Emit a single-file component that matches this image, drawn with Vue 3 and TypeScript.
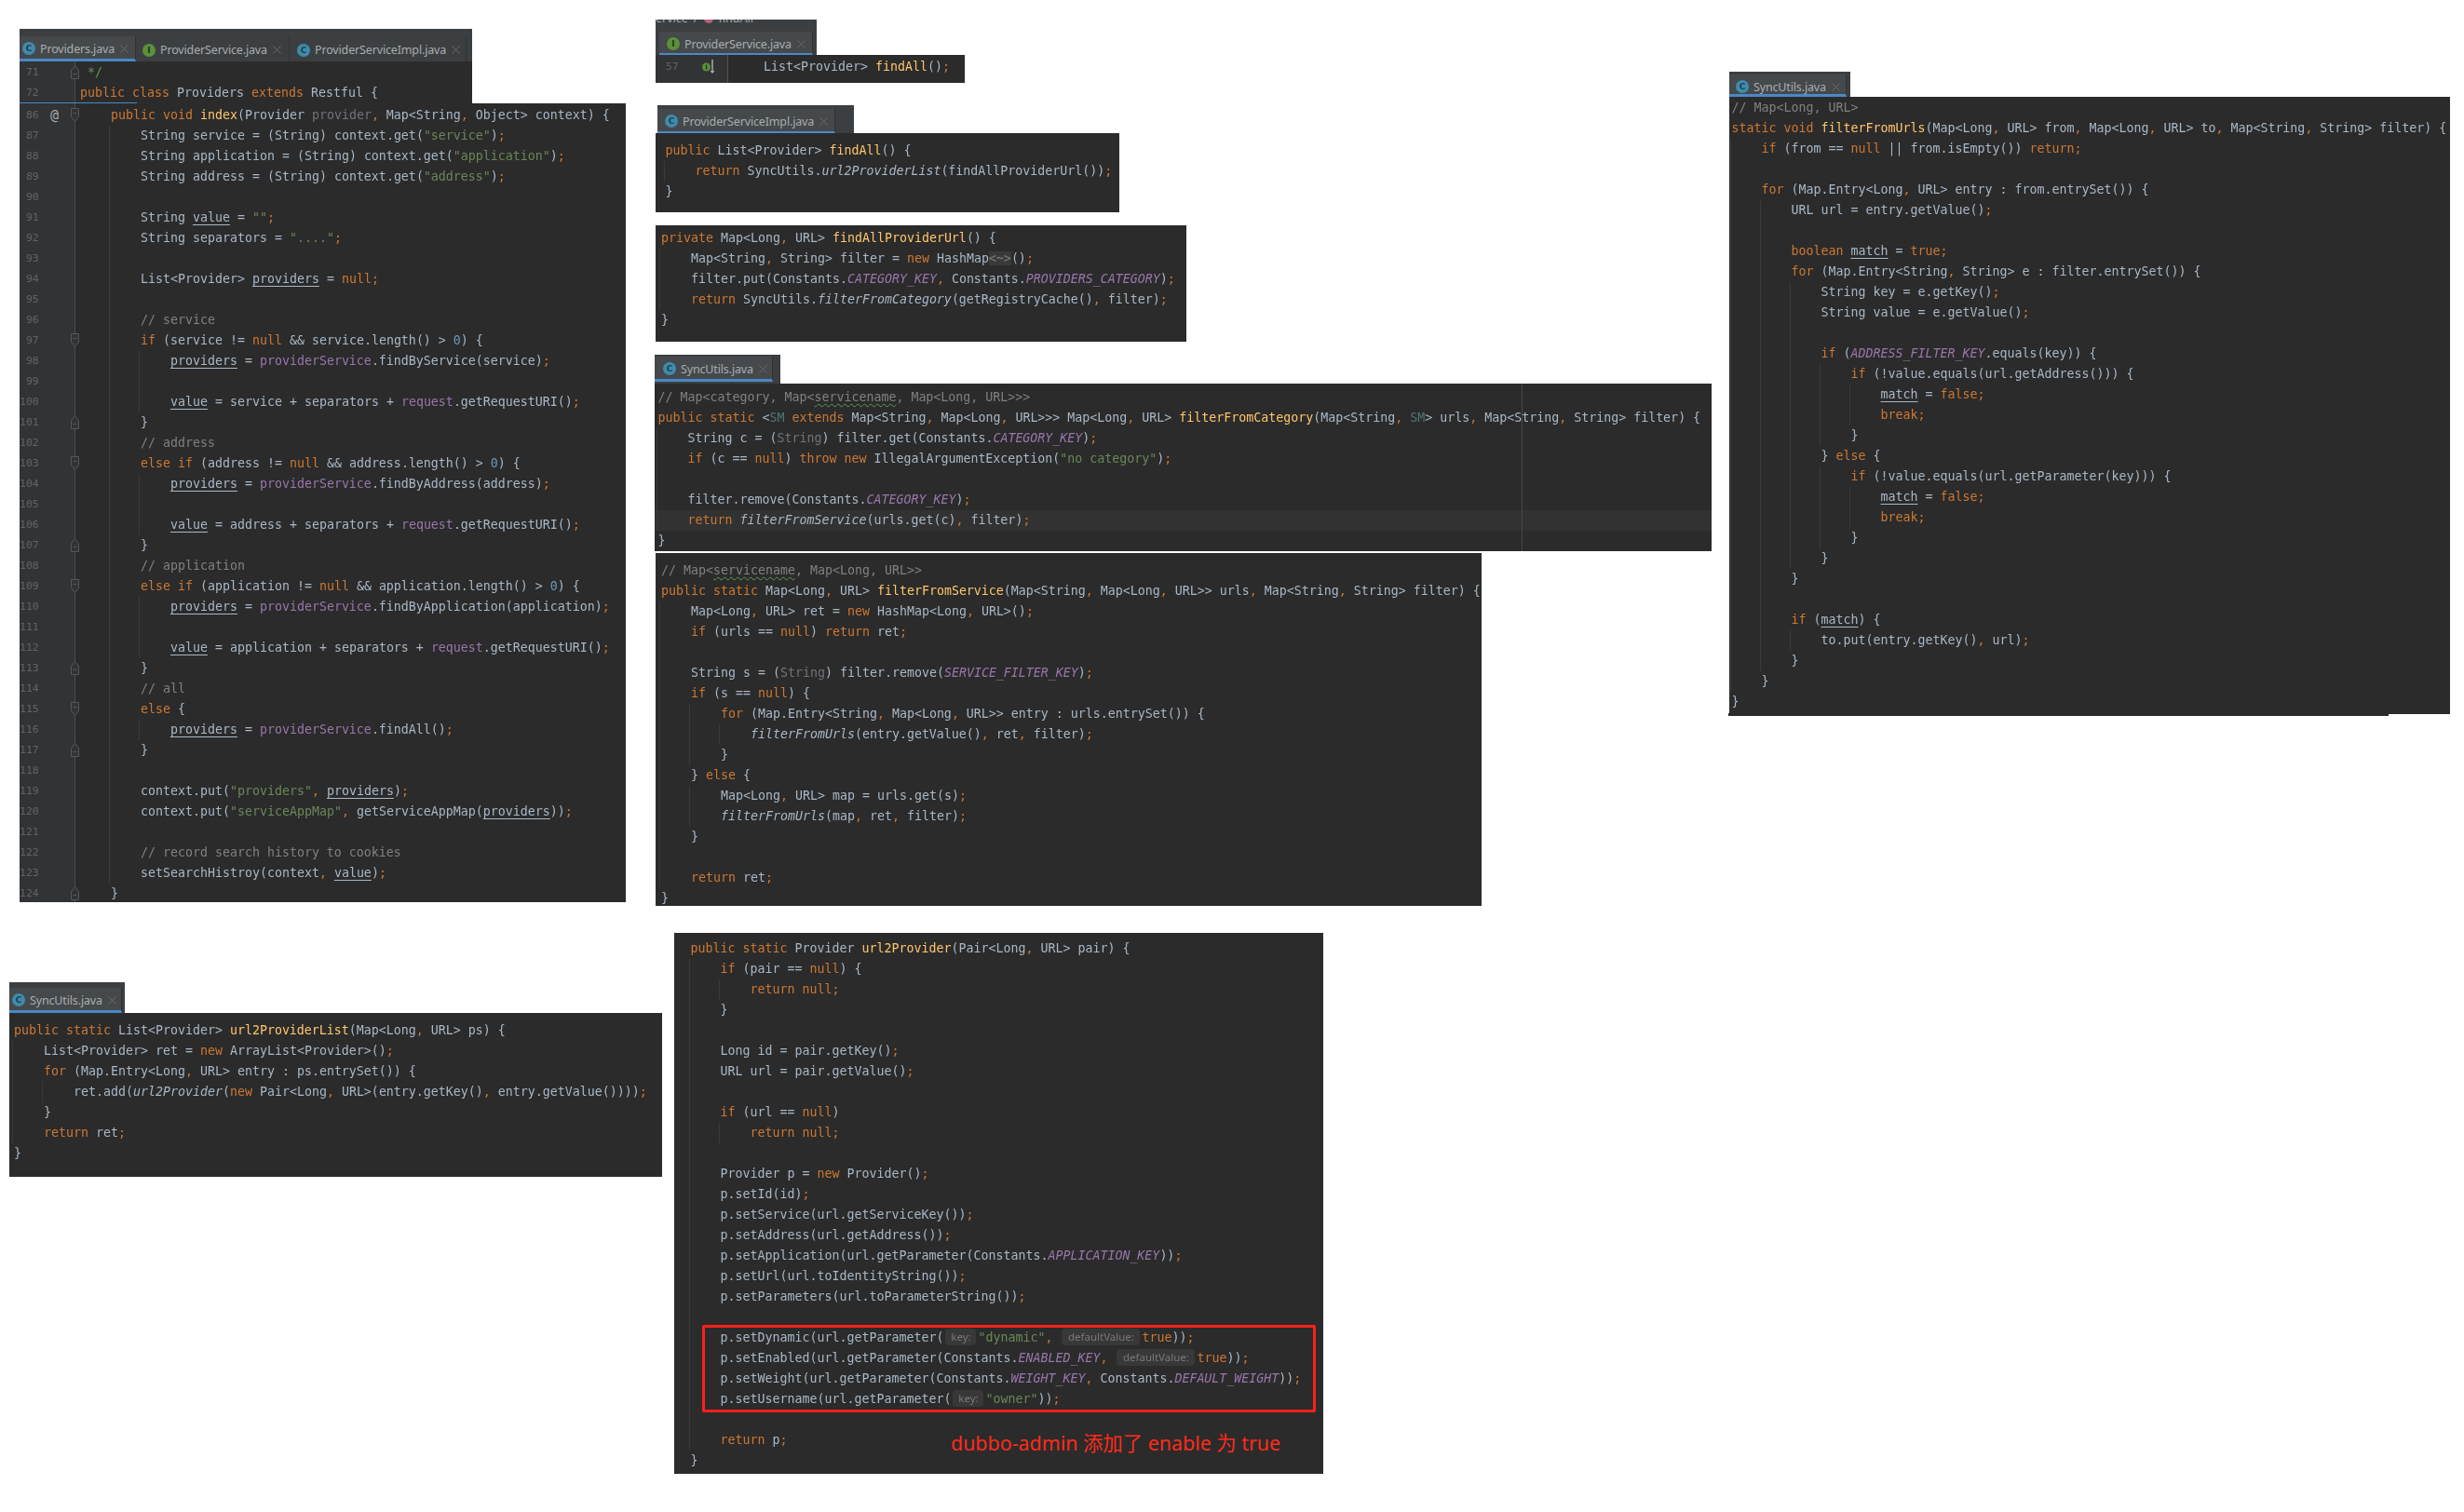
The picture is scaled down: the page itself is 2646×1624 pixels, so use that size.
<script setup lang="ts">
interface Tab { name: string; kind: 'c' | 'i'; w: number; pad: number; active?: boolean }
interface Bar { x: number; y: number; w: number; h: number; strip: number; tabH: number; off: number; line: number; nudge: number; tabs: Tab[]; crumb?: boolean }
interface Code {
  x: number; y: number; w: number; h: number; pad: number; textX: number; lines: string[];
  gutter?: number; first?: number; lnRight?: number; sep?: boolean; cur?: number; rule?: number;
  foldOpen?: number[]; foldClose?: number[]; at?: number; blue?: number; implMark?: boolean
}
interface Tok { t: string; c: string }

const bars: Bar[] = [
  { x: 21, y: 31, w: 486, h: 35, strip: 8, tabH: 27, off: 0, line: 3, nudge: 2, tabs: [
    { name: 'Providers.java', kind: 'c', w: 125, pad: 3, active: true },
    { name: 'ProviderService.java', kind: 'i', w: 165, pad: 7 },
    { name: 'ProviderServiceImpl.java', kind: 'c', w: 190, pad: 8 }
  ] },
  { x: 704, y: 21, w: 173, h: 38, strip: 13, tabH: 25, off: 4, line: 2, nudge: 3, crumb: true, tabs: [
    { name: 'ProviderService.java', kind: 'i', w: 165, pad: 8, active: true }
  ] },
  { x: 706, y: 113, w: 211, h: 30, strip: 4, tabH: 26, off: 0, line: 2, nudge: 2, tabs: [
    { name: 'ProviderServiceImpl.java', kind: 'c', w: 191, pad: 8, active: true }
  ] },
  { x: 703, y: 381, w: 135, h: 31, strip: 2, tabH: 27, off: 0, line: 3, nudge: 2, tabs: [
    { name: 'SyncUtils.java', kind: 'c', w: 127, pad: 9, active: true }
  ] },
  { x: 10, y: 1055, w: 124, h: 33, strip: 6, tabH: 27, off: 0, line: 3, nudge: 2, tabs: [
    { name: 'SyncUtils.java', kind: 'c', w: 121, pad: 3, active: true }
  ] },
  { x: 1857, y: 77, w: 130, h: 27, strip: 3, tabH: 24, off: 0, line: 3, nudge: 5, tabs: [
    { name: 'SyncUtils.java', kind: 'c', w: 126, pad: 7, active: true }
  ] }
]

const codes: Code[] = [
  { x: 21, y: 66, w: 486, h: 45, pad: 1, textX: 65, gutter: 60, first: 71, lnRight: 20.5, sep: true, foldClose: [0], blue: 126, lines: [
    ' [n:*/]',
    'public class Providers extends Restful {'
  ] },
  { x: 21, y: 111, w: 651, h: 858, pad: 2, textX: 66, gutter: 60, first: 86, lnRight: 20.5, sep: true, at: 0,
    foldOpen: [0, 11, 17, 23, 29], foldClose: [15, 21, 27, 31, 38], lines: [
    '    public void [f:index](Provider [d:provider], Map<String, Object> context) {',
    '        String service = (String) context.get("service");',
    '        String application = (String) context.get("application");',
    '        String address = (String) context.get("address");',
    '',
    '        String [u:value] = "";',
    '        String separators = "....";',
    '',
    '        List<Provider> [u:providers] = null;',
    '',
    '        // service',
    '        if (service != null && service.length() > 0) {',
    '            [u:providers] = [v:providerService].findByService(service);',
    '',
    '            [u:value] = service + separators + [v:request].getRequestURI();',
    '        }',
    '        // address',
    '        else if (address != null && address.length() > 0) {',
    '            [u:providers] = [v:providerService].findByAddress(address);',
    '',
    '            [u:value] = address + separators + [v:request].getRequestURI();',
    '        }',
    '        // application',
    '        else if (application != null && application.length() > 0) {',
    '            [u:providers] = [v:providerService].findByApplication(application);',
    '',
    '            [u:value] = application + separators + [v:request].getRequestURI();',
    '        }',
    '        // all',
    '        else {',
    '            [u:providers] = [v:providerService].findAll();',
    '        }',
    '',
    '        context.put("providers", [u:providers]);',
    '        context.put("serviceAppMap", getServiceAppMap([u:providers]));',
    '',
    '        // record search history to cookies',
    '        setSearchHistroy(context, [u:value]);',
    '    }'
  ] },
  { x: 704, y: 59, w: 332, h: 30, pad: 2, textX: 116, gutter: 78, first: 57, lnRight: 24.5, implMark: true, lines: [
    'List<Provider> [f:findAll]();'
  ] },
  { x: 704, y: 143, w: 498, h: 85, pad: 8, textX: 10.5, lines: [
    'public List<Provider> [f:findAll]() {',
    '    return SyncUtils.[i:url2ProviderList](findAllProviderUrl());',
    '}'
  ] },
  { x: 704, y: 242, w: 570, h: 125, pad: 3, textX: 6, lines: [
    'private Map<Long, URL> [f:findAllProviderUrl]() {',
    '    Map<String, String> filter = new HashMap[o:<~>]();',
    '    filter.put(Constants.[k:CATEGORY_KEY], Constants.[k:PROVIDERS_CATEGORY]);',
    '    return SyncUtils.[i:filterFromCategory](getRegistryCache(), filter);',
    '}'
  ] },
  { x: 703, y: 412, w: 1135, h: 180, pad: 4, textX: 3.5, cur: 6, rule: 931, lines: [
    '// Map<category, Map<[w:servicename], Map<Long, URL>>>',
    'public static <[g:SM] extends Map<String, Map<Long, URL>>> Map<Long, URL> [f:filterFromCategory](Map<String, [g:SM]> urls, Map<String, String> filter) {',
    '    String c = ([d:String]) filter.get(Constants.[k:CATEGORY_KEY]);',
    '    if (c == null) throw new IllegalArgumentException("no category");',
    '',
    '    filter.remove(Constants.[k:CATEGORY_KEY]);',
    '    return [i:filterFromService](urls.get(c), filter);',
    '}'
  ] },
  { x: 704, y: 594, w: 887, h: 379, pad: 8, textX: 6, lines: [
    '// Map<[w:servicename], Map<Long, URL>>',
    'public static Map<Long, URL> [f:filterFromService](Map<String, Map<Long, URL>> urls, Map<String, String> filter) {',
    '    Map<Long, URL> ret = new HashMap<Long, URL>();',
    '    if (urls == null) return ret;',
    '',
    '    String s = ([d:String]) filter.remove([k:SERVICE_FILTER_KEY]);',
    '    if (s == null) {',
    '        for (Map.Entry<String, Map<Long, URL>> entry : urls.entrySet()) {',
    '            [i:filterFromUrls](entry.getValue(), ret, filter);',
    '        }',
    '    } else {',
    '        Map<Long, URL> map = urls.get(s);',
    '        [i:filterFromUrls](map, ret, filter);',
    '    }',
    '',
    '    return ret;',
    '}'
  ] },
  { x: 724, y: 1002, w: 697, h: 581, pad: 6, textX: 17.6, lines: [
    'public static Provider [f:url2Provider](Pair<Long, URL> pair) {',
    '    if (pair == null) {',
    '        return null;',
    '    }',
    '',
    '    Long id = pair.getKey();',
    '    URL url = pair.getValue();',
    '',
    '    if (url == null)',
    '        return null;',
    '',
    '    Provider p = new Provider();',
    '    p.setId(id);',
    '    p.setService(url.getServiceKey());',
    '    p.setAddress(url.getAddress());',
    '    p.setApplication(url.getParameter(Constants.[k:APPLICATION_KEY]));',
    '    p.setUrl(url.toIdentityString());',
    '    p.setParameters(url.toParameterString());',
    '',
    '    p.setDynamic(url.getParameter([h:key:]"dynamic", [h:defaultValue:]true));',
    '    p.setEnabled(url.getParameter(Constants.[k:ENABLED_KEY], [h:defaultValue:]true));',
    '    p.setWeight(url.getParameter(Constants.[k:WEIGHT_KEY], Constants.[k:DEFAULT_WEIGHT]));',
    '    p.setUsername(url.getParameter([h:key:]"owner"));',
    '',
    '    return p;',
    '}'
  ] },
  { x: 10, y: 1088, w: 701, h: 176, pad: 8, textX: 5, lines: [
    'public static List<Provider> [f:url2ProviderList](Map<Long, URL> ps) {',
    '    List<Provider> ret = new ArrayList<Provider>();',
    '    for (Map.Entry<Long, URL> entry : ps.entrySet()) {',
    '        ret.add([i:url2Provider](new Pair<Long, URL>(entry.getKey(), entry.getValue())));',
    '    }',
    '    return ret;',
    '}'
  ] },
  { x: 1857, y: 104, w: 774, h: 663, pad: 1, textX: 2.6, lines: [
    '// Map<Long, URL>',
    'static void [f:filterFromUrls](Map<Long, URL> from, Map<Long, URL> to, Map<String, String> filter) {',
    '    if (from == null || from.isEmpty()) return;',
    '',
    '    for (Map.Entry<Long, URL> entry : from.entrySet()) {',
    '        URL url = entry.getValue();',
    '',
    '        boolean [u:match] = true;',
    '        for (Map.Entry<String, String> e : filter.entrySet()) {',
    '            String key = e.getKey();',
    '            String value = e.getValue();',
    '',
    '            if ([k:ADDRESS_FILTER_KEY].equals(key)) {',
    '                if (!value.equals(url.getAddress())) {',
    '                    [u:match] = false;',
    '                    break;',
    '                }',
    '            } else {',
    '                if (!value.equals(url.getParameter(key))) {',
    '                    [u:match] = false;',
    '                    break;',
    '                }',
    '            }',
    '        }',
    '',
    '        if ([u:match]) {',
    '            to.put(entry.getKey(), url);',
    '        }',
    '    }',
    '}'
  ] }
]

const KW = /\b(?:public|private|class|extends|static|void|if|else|null|return|new|for|throw|boolean|true|false|break)\b/
const SPLIT = /("[^"]*"|\b\d+\b|[;,]|\b[a-z]+\b)/
const MARK = /\[(\w+):([^\]]*)\]/g

function plain(text: string, comment: boolean): Tok[] {
  if (comment) return [{ t: text, c: 'cm' }]
  const out: Tok[] = []
  for (const part of text.split(SPLIT)) {
    if (!part) continue
    let c = ''
    if (part.startsWith('"')) c = 'st'
    else if (/^\d+$/.test(part)) c = 'nu'
    else if (part === ';' || part === ',') c = 'pu'
    else if (KW.test(part) && part.replace(KW, '') === '') c = 'kw'
    out.push({ t: part, c })
  }
  return out
}

function tokens(line: string): Tok[] {
  const comment = line.trim().startsWith('//')
  const out: Tok[] = []
  let last = 0
  for (const m of line.matchAll(MARK)) {
    const at = m.index as number
    if (at > last) out.push(...plain(line.slice(last, at), comment))
    out.push({ t: m[2], c: 'm-' + m[1] + (m[1] === 'h' && m[2] === 'key:' ? ' hk' : '') })
    last = at + m[0].length
  }
  if (last < line.length) out.push(...plain(line.slice(last), comment))
  return out
}

function indentOf(line: string): number {
  return line.length - line.trimStart().length
}

function guides(c: Code): { left: number; top: number; height: number }[] {
  const res: { left: number; top: number; height: number }[] = []
  const ls = c.lines
  ls.forEach((l, i) => {
    if (!l.trim()) return
    const n = indentOf(l)
    let next = i + 1
    while (next < ls.length && !ls[next].trim()) next++
    if (next >= ls.length || indentOf(ls[next]) <= n) return
    let j = next
    let end = next
    while (j < ls.length) {
      if (ls[j].trim()) {
        if (indentOf(ls[j]) <= n) break
        end = j
      }
      j++
    }
    res.push({
      left: c.textX - (c.gutter ?? 0) + n * 8 - 2,
      top: c.pad + (i + 1) * 22,
      height: (end - i) * 22
    })
  })
  return res
}

const view = codes.map((c) => ({
  ...c,
  rows: c.lines.map(tokens),
  guideList: guides(c)
}))

function box(o: { x: number; y: number; w: number; h: number }) {
  return { left: o.x + 'px', top: o.y + 'px', width: o.w + 'px', height: o.h + 'px' }
}
</script>

<template>
  <div class="canvas">
    <div v-for="(b, bi) in bars" :key="'b' + bi" class="tabbar" :style="box(b)">
      <div v-if="b.crumb" class="crumb">
        <span>ervice</span><span class="slash">/</span><i class="crumb-dot"></i><span>findAll</span>
      </div>
      <div class="tabs" :style="{ top: b.strip + 'px', left: b.off + 'px' }">
        <div
          v-for="t in b.tabs"
          :key="t.name"
          class="tab"
          :class="{ active: t.active }"
          :style="{ width: t.w + 'px', height: b.tabH + 'px', paddingLeft: t.pad + 'px', paddingTop: b.nudge + 'px', borderBottomWidth: t.active ? b.line + 'px' : '0' }"
        >
          <span class="ficon" :class="t.kind">{{ t.kind === 'c' ? 'C' : 'I' }}</span>
          <span class="tname">{{ t.name }}</span>
          <svg class="tclose" width="9" height="9" viewBox="0 0 9 9"><path d="M.5.5l8 8M8.5.5l-8 8" stroke="#686b6d" fill="none" /></svg>
        </div>
      </div>
    </div>

    <div v-for="(c, ci) in view" :key="'c' + ci" class="code" :style="box(c)">
      <div v-if="c.gutter" class="gutter" :class="{ sep: c.sep, edge: c.implMark }" :style="{ width: c.gutter + 'px', paddingTop: c.pad + 'px' }">
        <div v-for="(_, i) in c.rows" :key="i" class="gline">
          <span class="ln" :style="{ width: c.lnRight + 'px' }">{{ (c.first ?? 0) + i }}</span>
          <span v-if="c.at === i" class="atmark">@</span>
          <svg v-if="c.foldOpen?.includes(i)" class="fold" width="9" height="15" viewBox="0 0 9 15"><path d="M.5.5h8v9l-4 5-4-5zM2.5 5.500h4" fill="#313335" stroke="#55585a" /></svg>
          <svg v-if="c.foldClose?.includes(i)" class="fold" width="9" height="15" viewBox="0 0 9 15"><path d="M.5 14.500h8v-9l-4-5-4 5zM2.500 9.500h4" fill="#313335" stroke="#55585a" /></svg>
          <svg v-if="c.implMark" class="impl" width="16" height="18" viewBox="0 0 16 18">
            <circle cx="5.500" cy="9" r="4.500" fill="#5c8f3b" />
            <path d="M5.500 6.500v5" stroke="#2b3a20" stroke-width="1.500" />
            <path d="M12 1v13" stroke="#a8adb0" stroke-width="1.500" />
            <path d="M9.500 13h5L12 16z" fill="#a8adb0" />
          </svg>
        </div>
      </div>
      <div class="lines" :style="{ paddingTop: c.pad + 'px' }">
        <div
          v-for="(r, i) in c.rows"
          :key="i"
          class="row"
          :class="{ cur: c.cur === i }"
          :style="{ paddingLeft: c.textX - (c.gutter ?? 0) + 'px' }"
        ><span v-for="(k, ki) in r" :key="ki" :class="k.c">{{ k.t }}</span></div>
        <i
          v-for="(g, gi) in c.guideList"
          :key="'g' + gi"
          class="guide"
          :style="{ left: g.left + 'px', top: g.top + 'px', height: g.height + 'px' }"
        ></i>
        <i v-if="c.rule" class="rule" :style="{ left: c.rule + 'px' }"></i>
      </div>
      <i v-if="c.blue" class="blueline" :style="{ width: c.blue + 'px' }"></i>
    </div>

    <div class="underbar"></div>
    <div class="redbox"></div>
    <div class="note">dubbo-admin 添加了 enable 为 true</div>
  </div>
</template>

<style scoped>
.canvas {
  position: relative;
  width: 2646px;
  height: 1624px;
  overflow: hidden;
  background: #fff;
}
.tabbar {
  position: absolute;
  background: #3c3f41;
  overflow: hidden;
}
.crumb {
  position: absolute;
  left: 0;
  top: -9px;
  display: flex;
  align-items: center;
  gap: 6px;
  font: 12.500px "Noto Sans", sans-serif;
  color: #a7adb1;
  line-height: 16px;
  white-space: nowrap;
}
.crumb-dot {
  width: 10px;
  height: 10px;
  border-radius: 50%;
  background: #b5627a;
}
.tabs {
  position: absolute;
  display: flex;
}
.tab {
  box-sizing: border-box;
  display: flex;
  align-items: center;
  background: #3c3f41;
  border-right: 1px solid #323232;
  border-bottom: 0 solid #4a88c7;
}
.tab.active {
  background: #45494b;
}
.ficon {
  flex: none;
  width: 14px;
  height: 14px;
  border-radius: 50%;
  font: 700 9px/14px "DejaVu Sans", sans-serif;
  text-align: center;
}
.ficon.c {
  background: #3f8bac;
  color: #1f3f4d;
}
.ficon.i {
  background: #5c8f3b;
  color: #22361a;
}
.tname {
  margin-left: 5px;
  font: 12.500px "Noto Sans", sans-serif;
  letter-spacing: -0.150px;
  color: #a7adb1;
  white-space: nowrap;
}
.tclose {
  flex: none;
  margin-left: 6px;
}
.code {
  position: absolute;
  display: flex;
  background: #2b2b2b;
  overflow: hidden;
}
.gutter {
  flex: none;
  box-sizing: border-box;
  background: #313335;
}
.gutter.sep {
  border-right: 1px solid #4b4d4f;
}
.gutter.edge {
  border-right: 1px solid #505254;
}
.gline {
  position: relative;
  height: 22px;
}
.ln {
  display: block;
  text-align: right;
  font: 11.300px/22px "DejaVu Sans Mono", monospace;
  color: #606366;
  white-space: nowrap;
}
.atmark {
  position: absolute;
  left: 33px;
  top: 0;
  font: 400 15px/22px "DejaVu Sans Mono", monospace;
  color: #a5a8aa;
}
.fold {
  position: absolute;
  right: -5px;
  top: 3px;
}
.impl {
  position: absolute;
  left: 49px;
  top: 2px;
}
.lines {
  position: relative;
  flex: 1;
  min-width: 0;
}
.row {
  height: 22px;
  font: 13.290px/22px "DejaVu Sans Mono", monospace;
  color: #a9b7c6;
  white-space: pre;
  filter: blur(0.3px);
}
.row.cur {
  background: #323232;
}
.guide {
  position: absolute;
  width: 1px;
  background: #3a3a3a;
}
.rule {
  position: absolute;
  top: 0;
  bottom: 0;
  width: 1px;
  background: #474747;
}
.blueline {
  position: absolute;
  left: 0;
  bottom: 0;
  height: 1px;
  background: #4a88c7;
}
.kw { color: #cc7832; }
.pu { color: #cc7832; }
.st { color: #6a8759; }
.nu { color: #6897bb; }
.cm { color: #808080; }
.m-f { color: #ffc66d; }
.m-n { color: #629755; }
.m-k { color: #9876aa; font-style: italic; }
.m-i { font-style: italic; }
.m-v { color: #9876aa; }
.m-d { color: #72737a; }
.m-u { text-decoration: underline; text-underline-offset: 3px; }
.m-g { color: #507874; }
.m-w {
  color: #808080;
  text-decoration: underline wavy #629755 1px;
  text-underline-offset: 2px;
}
.m-o { color: #808080; background: #3a3a3a; }
.m-h {
  display: inline-block;
  box-sizing: border-box;
  width: 84px;
  height: 18px;
  margin: 0 2px;
  border-radius: 4px;
  background: #383838;
  color: #787878;
  font: 11.500px/18px "Noto Sans", sans-serif;
  text-align: center;
  vertical-align: 1px;
}
.m-h.hk {
  width: 33px;
}
.underbar {
  position: absolute;
  left: 1856px;
  top: 766px;
  width: 709px;
  height: 3px;
  background: #2b2b2b;
}
.redbox {
  position: absolute;
  left: 754px;
  top: 1423px;
  width: 659px;
  height: 94px;
  box-sizing: border-box;
  border: 3px solid #ff1f1a;
  border-radius: 2px;
}
.note {
  position: absolute;
  left: 1021px;
  top: 1534px;
  font: 21.400px/32px "Noto Sans", "Noto Sans CJK SC", sans-serif;
  color: #ff2a1a;
  white-space: nowrap;
}
</style>
